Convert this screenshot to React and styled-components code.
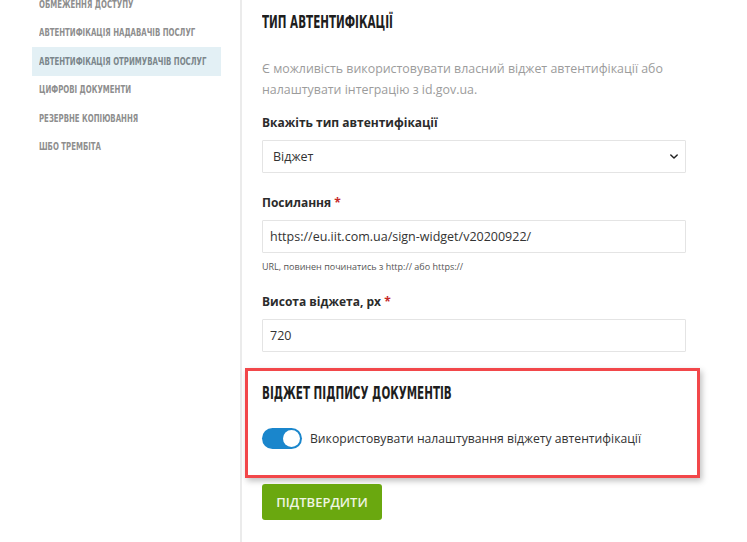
import styled, { createGlobalStyle } from "styled-components";

const GlobalStyle = createGlobalStyle`
  html, body {
    margin: 0;
    padding: 0;
    background: #ffffff;
    overflow: hidden;
  }
  body {
    font-family: "Open Sans", "Noto Sans", sans-serif;
  }
`;

const condensed = `"DejaVu Sans Condensed", "DejaVu Sans", "Liberation Sans", sans-serif`;

const menu = [
  "Обмеження доступу",
  "Автентифікація надавачів послуг",
  "Автентифікація отримувачів послуг",
  "Цифрові документи",
  "Резервне копіювання",
  "ШБО Трембіта",
];

const App = () => {
  return (
    <>
      <GlobalStyle />
      <Page>
        <Sidebar>
          <Menu>
            {menu.map((item, i) => (
              <MenuItem key={item} active={i === 2 ? 1 : 0}>
                <Narrow scale={0.705}>{item}</Narrow>
              </MenuItem>
            ))}
          </Menu>
        </Sidebar>

        <Main>
          <Heading>
            <Narrow scale={0.68}>Тип автентифікації</Narrow>
          </Heading>
          <Description>
            Є можливість використовувати власний віджет автентифікації або
            налаштувати інтеграцію з id.gov.ua.
          </Description>

          <Label>Вкажіть тип автентифікації</Label>
          <SelectWrap>
            <Select defaultValue="widget">
              <option value="widget">Віджет</option>
              <option value="idgov">id.gov.ua</option>
            </Select>
            <Chevron viewBox="0 0 10 6">
              <path
                d="M1 1l4 4 4-4"
                fill="none"
                stroke="#222"
                strokeWidth="1.8"
                strokeLinecap="round"
                strokeLinejoin="round"
              />
            </Chevron>
          </SelectWrap>

          <Label space={21}>
            Посилання <Required>*</Required>
          </Label>
          <Input defaultValue="https://eu.iit.com.ua/sign-widget/v20200922/" />
          <Hint>URL, повинен починатись з http:// або https://</Hint>

          <Label space={19}>
            Висота віджета, px <Required>*</Required>
          </Label>
          <Input defaultValue="720" />

          <Section>
            <SectionTitle>
              <Narrow scale={0.68}>Віджет підпису документів</Narrow>
            </SectionTitle>
            <ToggleRow>
              <Toggle on={1}>
                <Knob />
              </Toggle>
              <ToggleText>
                Використовувати налаштування віджету автентифікації
              </ToggleText>
            </ToggleRow>
          </Section>

          <SubmitButton>Підтвердити</SubmitButton>
        </Main>
      </Page>
    </>
  );
};

const Page = styled.div`
  display: flex;
  width: 747px;
  height: 542px;
`;

const Sidebar = styled.aside`
  width: 240px;
  flex-shrink: 0;
  border-right: 2px solid #ebebeb;
`;

const Menu = styled.ul`
  list-style: none;
  margin: -10px 0 0 32px;
  padding: 0;
  width: 189px;
`;

const MenuItem = styled.li`
  height: 28.5px;
  display: flex;
  align-items: center;
  padding-left: 7px;
  overflow: hidden;
  font-family: ${condensed};
  font-weight: bold;
  font-size: 11px;
  text-transform: uppercase;
  color: ${(props) => (props.active ? "#7b868b" : "#8e8e8e")};
  background-color: ${(props) => (props.active ? "#e3f0f5" : "transparent")};
`;

const Narrow = styled.span`
  display: inline-block;
  white-space: nowrap;
  transform: scaleX(${(props) => props.scale});
  transform-origin: left center;
`;

const Main = styled.main`
  flex: 1;
  padding: 12px 0 0 20px;
  width: 424px;
  max-width: 424px;
`;

const Heading = styled.h2`
  margin: 0;
  font-family: ${condensed};
  font-weight: bold;
  font-size: 17px;
  line-height: 20px;
  text-transform: uppercase;
  color: #1e1e1e;
`;

const Description = styled.p`
  margin: 26px 0 0;
  font-size: 12.4px;
  line-height: 21px;
  color: #9c9c9c;
`;

const Label = styled.div`
  margin: ${(props) => props.space || 14}px 0 8px;
  font-size: 12px;
  line-height: 18px;
  font-weight: 700;
  color: #2b2b2b;
`;

const Required = styled.span`
  color: #c62828;
`;

const SelectWrap = styled.div`
  position: relative;
`;

const Select = styled.select`
  appearance: none;
  width: 100%;
  height: 33px;
  padding: 0 10px;
  border: 1px solid #e4e4e4;
  border-radius: 1px;
  background: #fff;
  font-family: "Open Sans", "Noto Sans", sans-serif;
  font-size: 12.5px;
  color: #333;
  outline: none;
`;

const Chevron = styled.svg`
  position: absolute;
  right: 8px;
  top: 14px;
  width: 8px;
  height: 5px;
  pointer-events: none;
`;

const Input = styled.input`
  display: block;
  box-sizing: border-box;
  width: 100%;
  height: 33px;
  padding: 0 7px;
  border: 1px solid #e4e4e4;
  border-radius: 1px;
  font-family: "Open Sans", "Noto Sans", sans-serif;
  font-size: 12.5px;
  color: #333;
  outline: none;
`;

const Hint = styled.div`
  margin-top: 7px;
  font-size: 9px;
  line-height: 14px;
  color: #555;
`;

const Section = styled.section`
  margin: 16px -14px 0 -17px;
  padding: 12px 14px 26px 14px;
  border: 3px solid #f2474a;
  box-shadow: 2px 3px 6px rgba(0, 0, 0, 0.25);
`;

const SectionTitle = styled.h3`
  margin: 0;
  font-family: ${condensed};
  font-weight: bold;
  font-size: 17px;
  line-height: 20px;
  text-transform: uppercase;
  color: #1e1e1e;
`;

const ToggleRow = styled.div`
  display: flex;
  align-items: center;
  gap: 8px;
  margin-top: 25px;
`;

const Toggle = styled.div`
  position: relative;
  width: 40px;
  height: 21px;
  border-radius: 11px;
  background-color: ${(props) => (props.on ? "#1a86cc" : "#c8c8c8")};
  flex-shrink: 0;
`;

const Knob = styled.div`
  position: absolute;
  right: 2px;
  top: 2px;
  width: 17px;
  height: 17px;
  border-radius: 50%;
  background: #fff;
`;

const ToggleText = styled.span`
  font-size: 12.2px;
  color: #333;
`;

const SubmitButton = styled.button`
  display: block;
  margin-top: 6px;
  width: 120px;
  height: 36px;
  border: none;
  border-radius: 3px;
  background-color: #6aa80f;
  font-family: "Open Sans", "Noto Sans", sans-serif;
  font-weight: 600;
  font-size: 13px;
  text-transform: uppercase;
  color: #eef5e2;
`;

export default App;
